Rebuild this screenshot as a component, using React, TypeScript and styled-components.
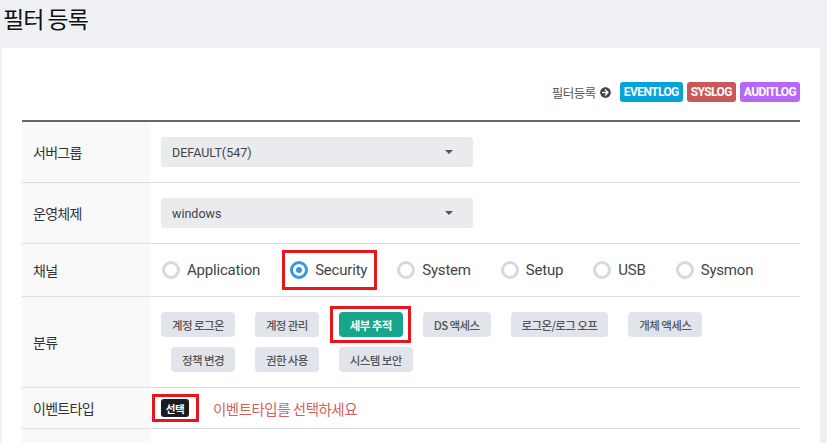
import React from "react";
import styled, { createGlobalStyle } from "styled-components";
import { FaArrowCircleRight } from "react-icons/fa";

const GlobalStyle = createGlobalStyle`
  html, body {
    margin: 0;
    padding: 0;
    background: #eef0f3;
    font-family: "Noto Sans CJK KR", "Noto Sans", sans-serif;
  }
  * {
    box-sizing: border-box;
  }
`;

const channels = ["Application", "Security", "System", "Setup", "USB", "Sysmon"];

const categoryRows = [
  ["계정 로그온", "계정 관리", "세부 추적", "DS 액세스", "로그온/로그 오프", "개체 액세스"],
  ["정책 변경", "권한 사용", "시스템 보안"],
];

const App = () => {
  return (
    <Page>
      <GlobalStyle />
      <Title>필터 등록</Title>
      <Card>
        <TopBar>
          <RegisterLink>
            필터등록 <FaArrowCircleRight size={11} color="#444" />
          </RegisterLink>
          <Badge $color="#06a3da">EVENTLOG</Badge>
          <Badge $color="#c85859">SYSLOG</Badge>
          <Badge $color="#b667f6">AUDITLOG</Badge>
        </TopBar>

        <Table>
          <Row>
            <Label>서버그룹</Label>
            <Value $pad="15px 10px">
              <Select>
                DEFAULT(547)
                <Caret />
              </Select>
            </Value>
          </Row>

          <Row>
            <Label>운영체제</Label>
            <Value $pad="15px 10px">
              <Select>
                windows
                <Caret />
              </Select>
            </Value>
          </Row>

          <Row>
            <Label>채널</Label>
            <Value $pad="0 11px" $height={52}>
              <RadioGroup>
                {channels.map((c) => {
                  const radio = (
                    <RadioItem key={c}>
                      <RadioCircle $checked={c === "Security"} />
                      {c}
                    </RadioItem>
                  );
                  return c === "Security" ? (
                    <Highlight key={c} $v={11} $h={8} $r={10}>
                      {radio}
                    </Highlight>
                  ) : (
                    radio
                  );
                })}
              </RadioGroup>
            </Value>
          </Row>

          <Row>
            <Label>분류</Label>
            <Value $pad="15px 10px">
              <CategoryGrid>
                {categoryRows.map((row, i) => (
                  <CategoryRow key={i} $indent={i === 0 ? 0 : 10}>
                    {row.map((name) =>
                      name === "세부 추적" ? (
                        <Highlight key={name} $v={6} $h={9} $r={8}>
                          <CategoryButton $active>{name}</CategoryButton>
                        </Highlight>
                      ) : (
                        <CategoryButton key={name}>{name}</CategoryButton>
                      )
                    )}
                  </CategoryRow>
                ))}
              </CategoryGrid>
            </Value>
          </Row>

          <Row>
            <Label>이벤트타입</Label>
            <Value $pad="0 10px" $height={40}>
              <Highlight $v={5} $h={9} $r={10}>
                <SelectTag>선택</SelectTag>
              </Highlight>
              <Warning>이벤트타입를 선택하세요</Warning>
            </Value>
          </Row>

          <Row>
            <Label />
            <Value $pad="0" $height={40} />
          </Row>
        </Table>
      </Card>
    </Page>
  );
};

const Page = styled.div`
  display: flex;
  flex-direction: column;
  width: 827px;
  height: 443px;
  overflow: hidden;
`;

const Title = styled.h1`
  flex-shrink: 0;
  margin: 0;
  padding: 0 0 0 3px;
  height: 48px;
  line-height: 36px;
  font-size: 23px;
  font-weight: 400;
  letter-spacing: -1px;
  color: #111;
`;

const Card = styled.div`
  flex-shrink: 0;
  margin-left: 2px;
  width: 818px;
  min-height: 395px;
  background: #fff;
  padding: 34px 20px 0;
`;

const TopBar = styled.div`
  display: flex;
  justify-content: flex-end;
  align-items: center;
  gap: 4px;
  height: 20px;
  margin-bottom: 18px;
`;

const RegisterLink = styled.span`
  display: flex;
  align-items: center;
  gap: 4px;
  margin-right: 5px;
  font-size: 12.5px;
  letter-spacing: -0.5px;
  color: #555;
`;

const Badge = styled.span<{ $color: string }>`
  display: inline-flex;
  align-items: center;
  height: 20px;
  padding: 0 4px;
  border-radius: 3px;
  background: ${(p) => p.$color};
  color: #fff;
  font-family: Roboto, "Liberation Sans", sans-serif;
  font-weight: 700;
  font-size: 12px;
  letter-spacing: -0.6px;
`;

const Table = styled.div`
  border-top: 2px solid #666;
`;

const Row = styled.div`
  display: grid;
  grid-template-columns: 129px 1fr;
  border-bottom: 1px solid #dddddd;
`;

const Label = styled.div`
  display: flex;
  align-items: center;
  padding-left: 11px;
  background: #f9f9f9;
  font-size: 14px;
  letter-spacing: -0.7px;
  color: #333;
`;

const Value = styled.div<{ $pad: string; $height?: number }>`
  display: flex;
  align-items: center;
  padding: ${(p) => p.$pad};
  ${(p) => (p.$height ? `height: ${p.$height}px;` : "")}
`;

const Select = styled.div`
  display: flex;
  align-items: center;
  width: 312px;
  height: 30px;
  padding: 0 11px;
  border-radius: 3px;
  background: #e9ebee;
  font-family: Roboto, "Liberation Sans", sans-serif;
  font-size: 12.5px;
  color: #444;
`;

const Caret = styled.span`
  margin-left: auto;
  margin-right: 9px;
  width: 0;
  height: 0;
  border-left: 4px solid transparent;
  border-right: 4px solid transparent;
  border-top: 4px solid #555;
`;

const RadioGroup = styled.div`
  display: flex;
  align-items: center;
  gap: 30px;
`;

const RadioItem = styled.label`
  display: flex;
  align-items: center;
  gap: 7px;
  font-family: Roboto, "Liberation Sans", sans-serif;
  font-size: 15px;
  letter-spacing: -0.2px;
  color: #444;
`;

const RadioCircle = styled.span<{ $checked?: boolean }>`
  position: relative;
  width: 18px;
  height: 18px;
  border-radius: 50%;
  border: 3px solid ${(p) => (p.$checked ? "#3a97dc" : "#d6dadd")};
  background: #fff;
  &::after {
    content: "";
    display: ${(p) => (p.$checked ? "block" : "none")};
    position: absolute;
    left: 3px;
    top: 3px;
    width: 6px;
    height: 6px;
    border-radius: 50%;
    background: #3a97dc;
  }
`;

const Highlight = styled.span<{ $v: number; $h: number; $r: number }>`
  position: relative;
  display: inline-flex;
  &::after {
    content: "";
    position: absolute;
    top: -${(p) => p.$v}px;
    bottom: -${(p) => p.$v}px;
    left: -${(p) => p.$h}px;
    right: -${(p) => p.$r}px;
    border: 3px solid #e8141e;
    pointer-events: none;
  }
`;

const CategoryGrid = styled.div`
  display: flex;
  flex-direction: column;
  gap: 10px;
`;

const CategoryRow = styled.div<{ $indent: number }>`
  display: flex;
  gap: 20px;
  padding-left: ${(p) => p.$indent}px;
`;

const CategoryButton = styled.span<{ $active?: boolean }>`
  display: inline-flex;
  align-items: center;
  height: 25px;
  padding: 0 11px;
  border-radius: 4px;
  background: ${(p) => (p.$active ? "#17a689" : "#e1e5eb")};
  color: ${(p) => (p.$active ? "#fff" : "#555")};
  font-size: 11.5px;
  font-weight: ${(p) => (p.$active ? 700 : 500)};
  letter-spacing: -0.6px;
  white-space: nowrap;
`;

const SelectTag = styled.span`
  display: inline-flex;
  align-items: center;
  justify-content: center;
  width: 28px;
  height: 18px;
  border-radius: 3px;
  background: #1c1c1e;
  color: #fff;
  font-size: 10.5px;
  font-weight: 700;
  letter-spacing: -0.5px;
`;

const Warning = styled.span`
  margin-left: 24px;
  font-size: 14.5px;
  letter-spacing: -0.5px;
  color: #d35f5f;
`;

export default App;
